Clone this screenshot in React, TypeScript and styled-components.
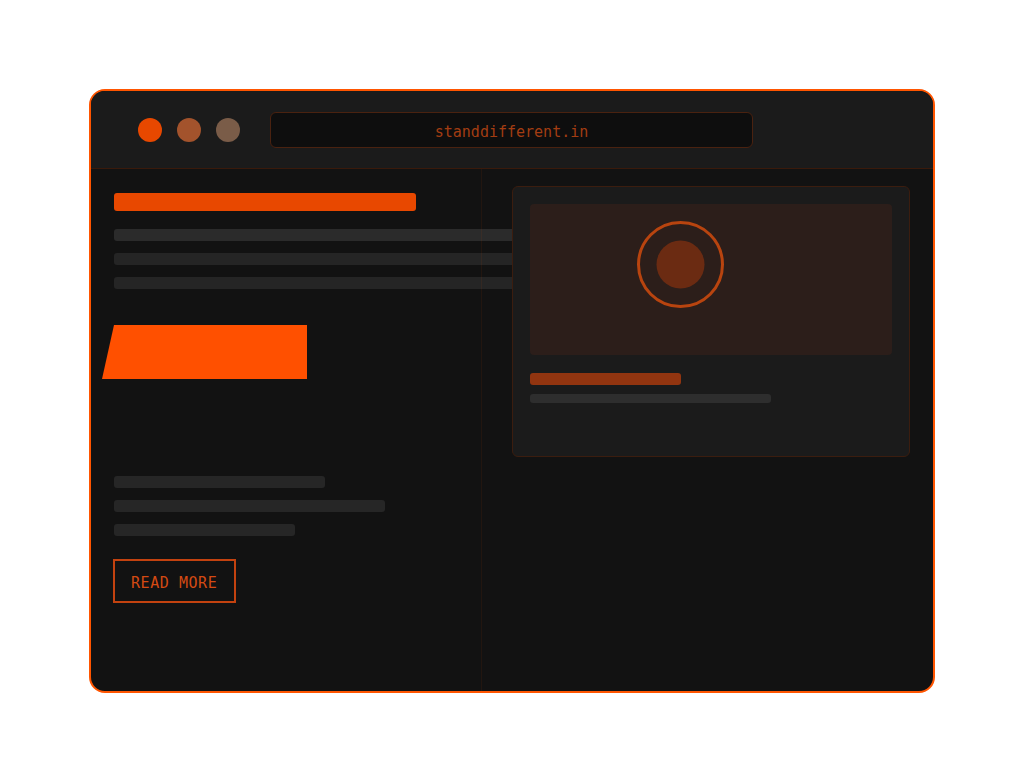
import styled, { createGlobalStyle } from 'styled-components';

const GlobalStyle = createGlobalStyle`
  * { box-sizing: border-box; }
  html, body {
    margin: 0;
    padding: 0;
    background: #ffffff;
    font-family: "DejaVu Sans", "Liberation Sans", sans-serif;
  }
`;

const Page = styled.div`
  width: 1024px;
  height: 783px;
  display: flex;
  justify-content: center;
  align-items: flex-start;
  padding-top: 89px;
`;

const Frame = styled.div`
  width: 846px;
  height: 604px;
  border: 2px solid #ff5500;
  border-radius: 16px;
  overflow: hidden;
  background: #121212;
  display: flex;
  flex-direction: column;
`;

// Browser chrome
const TopBar = styled.header`
  height: 78px;
  flex-shrink: 0;
  background: #1b1b1b;
  border-bottom: 1px solid #3a1a0b;
  display: flex;
  align-items: center;
  padding-left: 47px;
`;

const Dots = styled.div`
  display: flex;
  gap: 15px;
  margin-right: 30px;
`;

const Dot = styled.span<{ $color: string }>`
  width: 24px;
  height: 24px;
  border-radius: 50%;
  background: ${(p) => p.$color};
`;

const UrlBar = styled.div`
  width: 483px;
  height: 36px;
  background: #0e0e0e;
  border: 1px solid #4a2210;
  border-radius: 6px;
  display: flex;
  align-items: center;
  justify-content: center;
  padding-top: 5px;
  font-family: "DejaVu Sans Mono", "Liberation Mono", monospace;
  font-size: 15px;
  color: #a33d12;
`;

// Page body
const Body = styled.main`
  flex: 1;
  display: flex;
`;

const LeftCol = styled.section`
  width: 390px;
  flex-shrink: 0;
  padding: 24px 0 0 23px;
  display: flex;
  flex-direction: column;
`;

const RightCol = styled.section`
  flex: 1;
  border-left: 1px solid rgba(255, 80, 0, 0.07);
  padding: 17px 0 0 30px;
`;

const Bar = styled.div<{ $w: number; $h?: number; $color: string; $mt?: number }>`
  width: ${(p) => p.$w}px;
  height: ${(p) => p.$h ?? 12}px;
  background: ${(p) => p.$color};
  border-radius: 3px;
  margin-top: ${(p) => p.$mt ?? 0}px;
  flex-shrink: 0;
`;

const SlantButton = styled.div`
  width: 205px;
  height: 54px;
  margin: 36px 0 0 -12px;
  background: #ff5000;
  clip-path: polygon(12px 0, 100% 0, 100% 100%, 0 100%);
  flex-shrink: 0;
`;

const ReadMore = styled.button`
  align-self: flex-start;
  width: 123px;
  height: 44px;
  margin: 23px 0 0 -1px;
  padding: 3px 0 0 16px;
  background: transparent;
  border: 2px solid #c3420f;
  color: #d44a12;
  font-family: "DejaVu Sans Mono", "Liberation Mono", monospace;
  font-size: 15px;
  letter-spacing: 0.55px;
  display: flex;
  align-items: center;
  white-space: nowrap;
  cursor: pointer;
`;

// Preview card
const Card = styled.div`
  width: 398px;
  height: 271px;
  background: #1b1b1b;
  border: 1px solid #3b1d0f;
  border-radius: 6px;
  padding: 17px;
`;

const Media = styled.div`
  position: relative;
  height: 151px;
  background: #2c1e1a;
  border-radius: 4px;
`;

const Target = styled.svg`
  position: absolute;
  left: 107px;
  top: 17px;
`;

export default function App() {
  return (
    <>
      <GlobalStyle />
      <Page>
        <Frame>
          <TopBar>
            <Dots>
              <Dot $color="#e84800" />
              <Dot $color="#a3532c" />
              <Dot $color="#7a5c48" />
            </Dots>
            <UrlBar>standdifferent.in</UrlBar>
          </TopBar>

          <Body>
            <LeftCol>
              <Bar $w={302} $h={18} $color="#e84800" />
              <Bar $w={440} $color="#2b2b2b" $mt={18} />
              <Bar $w={440} $color="#252525" $mt={12} />
              <Bar $w={440} $color="#252525" $mt={12} />

              <SlantButton />

              <Bar $w={211} $color="#262626" $mt={97} />
              <Bar $w={271} $color="#262626" $mt={12} />
              <Bar $w={181} $color="#262626" $mt={12} />

              <ReadMore>READ MORE</ReadMore>
            </LeftCol>

            <RightCol>
              <Card>
                <Media>
                  <Target width="87" height="87" viewBox="0 0 87 87">
                    <circle cx="43.5" cy="43.5" r="42" fill="none" stroke="#b8440f" strokeWidth="3" />
                    <circle cx="43.5" cy="43.5" r="24" fill="#6b2b12" />
                  </Target>
                </Media>
                <Bar $w={151} $color="#923510" $mt={18} />
                <Bar $w={241} $h={9} $color="#2e2e2e" $mt={9} />
              </Card>
            </RightCol>
          </Body>
        </Frame>
      </Page>
    </>
  );
}
